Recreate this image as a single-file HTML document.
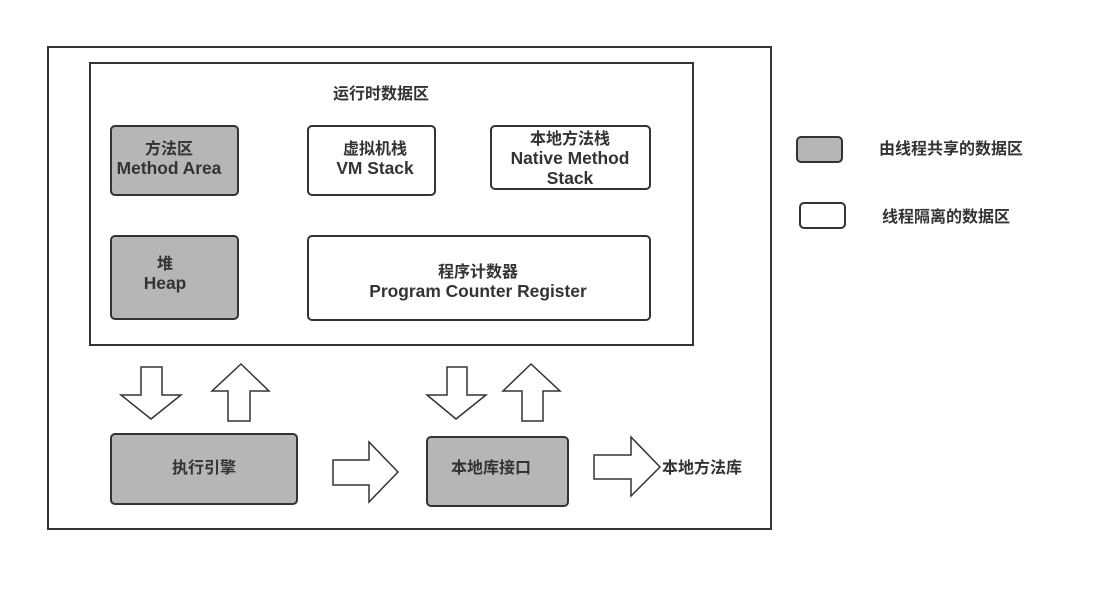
<!DOCTYPE html>
<html><head><meta charset="utf-8"><style>
html,body{margin:0;padding:0;background:#fff;width:1093px;height:592px;overflow:hidden}
text{font-family:"Liberation Sans","Noto Sans CJK SC",sans-serif;font-weight:bold;font-size:16px;fill:#333;text-anchor:middle}
text.e{font-size:17.4px}
</style></head><body>
<svg width="1093" height="592" viewBox="0 0 1093 592" xmlns="http://www.w3.org/2000/svg">
<g fill="none" stroke="#333" stroke-width="2">
<rect x="48" y="47" width="723" height="482"/>
<rect x="90" y="63" width="603" height="282"/>
</g>
<g stroke="#333" stroke-width="2">
<rect x="111" y="126" width="127" height="69" rx="4" fill="#b6b6b6"/>
<rect x="308" y="126" width="127" height="69" rx="4" fill="#fff"/>
<rect x="491" y="126" width="159" height="63" rx="4" fill="#fff"/>
<rect x="111" y="236" width="127" height="83" rx="4" fill="#b6b6b6"/>
<rect x="308" y="236" width="342" height="84" rx="4" fill="#fff"/>
<rect x="111" y="434" width="186" height="70" rx="4" fill="#b6b6b6"/>
<rect x="427" y="437" width="141" height="69" rx="4" fill="#b6b6b6"/>
<rect x="797" y="137" width="45" height="25" rx="4" fill="#b6b6b6"/>
<rect x="800" y="203" width="45" height="25" rx="4" fill="#fff"/>
</g>
<g fill="#fff" stroke="#333" stroke-width="1.5">
<polygon points="141,367 162,367 162,395 181,395 151,419 121,395 141,395"/>
<polygon points="241,364 269,391 250,391 250,421 228,421 228,391 212,391"/>
<polygon points="447,367 467,367 467,395 486,395 456,419 427,395 447,395"/>
<polygon points="531,364 560,391 543,391 543,421 522,421 522,391 503,391"/>
<polygon points="333,460 369,460 369,442 398,472 369,502 369,485 333,485"/>
<polygon points="594,455 631,455 631,437 660,467 631,496 631,479 594,479"/>
</g>
<text x="381" y="99">运行时数据区</text>
<text x="169" y="154">方法区</text>
<text class="e" x="169" y="174">Method Area</text>
<text x="375" y="154">虚拟机栈</text>
<text class="e" x="375" y="174">VM Stack</text>
<text x="570" y="144">本地方法栈</text>
<text class="e" x="570" y="164">Native Method</text>
<text class="e" x="570" y="184">Stack</text>
<text x="165" y="269">堆</text>
<text class="e" x="165" y="289">Heap</text>
<text x="478" y="277">程序计数器</text>
<text class="e" x="478" y="297">Program Counter Register</text>
<text x="204" y="473">执行引擎</text>
<text x="491" y="473">本地库接口</text>
<text x="702" y="473">本地方法库</text>
<text x="951" y="154">由线程共享的数据区</text>
<text x="946" y="222">线程隔离的数据区</text>
</svg>
</body></html>
